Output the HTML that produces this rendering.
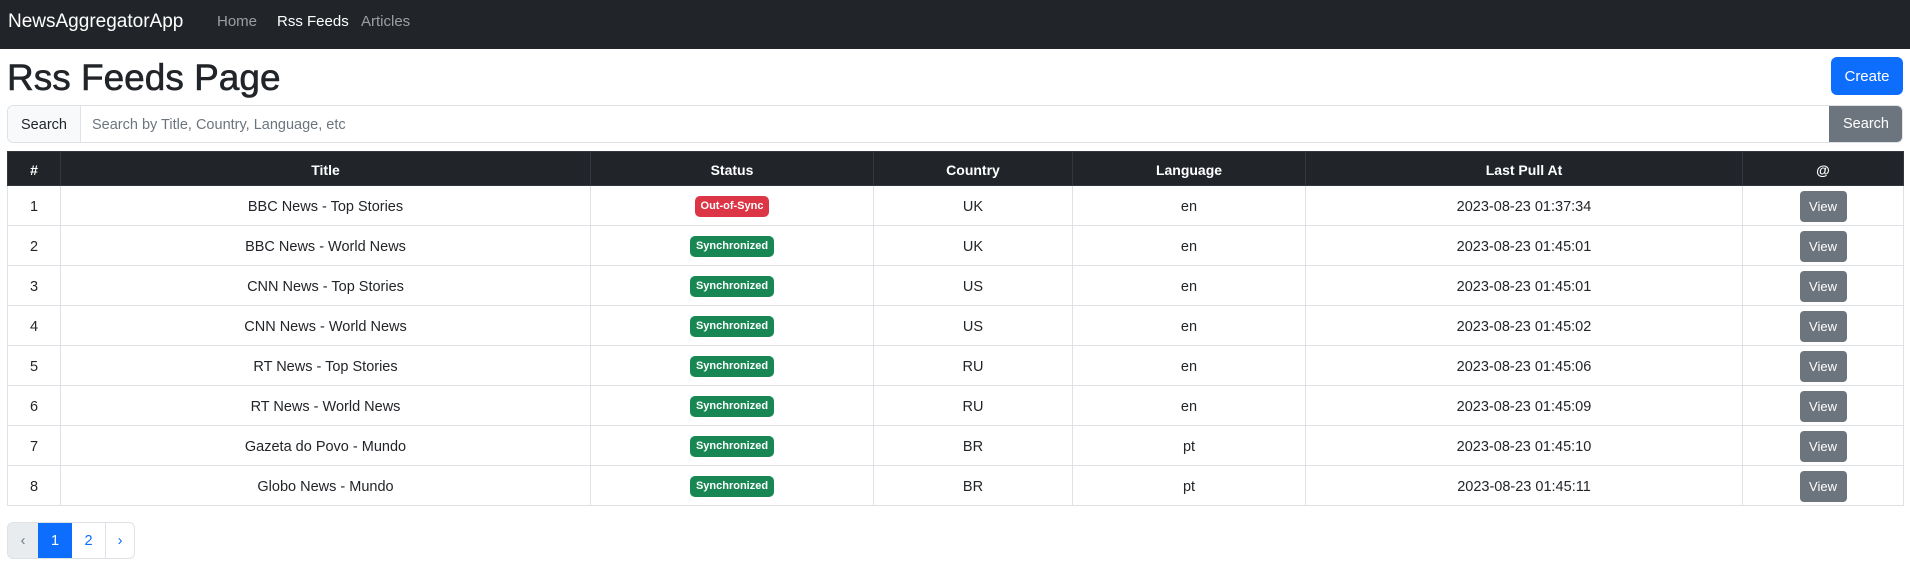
<!DOCTYPE html>
<html><head><meta charset="utf-8"><style>
*{box-sizing:border-box;margin:0;padding:0}
body{width:1910px;height:564px;overflow:hidden;background:#fff;font-family:"Liberation Sans",sans-serif;color:#212529;font-size:14.5px}
.nav{height:49px;background:#212529;position:relative}
.nav span{position:absolute;top:13px;font-size:15px;color:rgba(255,255,255,.55)}
.nav .brand{left:8px;top:11px;font-size:19px;color:#fff}
h1{position:absolute;left:7px;top:54px;font-size:37px;font-weight:normal;line-height:48px;-webkit-text-stroke:0.6px #212529}
.create{position:absolute;left:1831px;top:57px;width:72px;height:38px;background:#0d6efd;color:#fff;border-radius:6px;text-align:center;line-height:40px;font-size:15px}
.ig{position:absolute;left:7px;top:105px;width:1896px;height:38px;border:1px solid #dee2e6;border-radius:6px;display:flex;overflow:hidden}
.ig .l{width:73px;background:#f8f9fa;border-right:1px solid #dee2e6;text-align:center;line-height:38px}
.ig .i{flex:1;line-height:38px;padding-left:11px;color:#6c757d}
.ig .b{width:74px;background:#6c757d;color:#fff;text-align:center;line-height:38px;margin:-1px -1px -1px 0}
table{position:absolute;left:7px;top:151px;width:1896px;border-collapse:collapse;table-layout:fixed}
th{background:#212529;color:#fff;height:34px;font-size:14px;font-weight:700;border:1px solid #32383e;text-align:center;padding-top:2px}
td{height:40px;border:1px solid #dee2e6;text-align:center;padding-top:2px}
.bd{display:inline-block;vertical-align:middle;color:#fff;font-size:11px;font-weight:700;border-radius:5px;padding:0 6px;line-height:21px;height:21px}
.r{background:#dc3545}.g{background:#198754}
.v{display:inline-block;vertical-align:middle;background:#6c757d;color:#fff;font-size:13px;width:47px;height:31px;line-height:32px;border-radius:4px}
.pg{position:absolute;left:7px;top:522px;height:37px;display:flex;border:1px solid #dee2e6;border-radius:6px;overflow:hidden}
.pg div{line-height:36px;text-align:center;color:#0d6efd;border-left:1px solid #dee2e6}
</style></head><body>
<div class="nav"><span class="brand">NewsAggregatorApp</span><span style="left:217px">Home</span><span style="left:277px;color:#fff">Rss Feeds</span><span style="left:361px">Articles</span></div>
<h1>Rss Feeds Page</h1>
<div class="create">Create</div>
<div class="ig"><div class="l">Search</div><div class="i">Search by Title, Country, Language, etc</div><div class="b">Search</div></div>
<table>
<colgroup><col style="width:53px"><col style="width:530px"><col style="width:283px"><col style="width:199px"><col style="width:233px"><col style="width:437px"><col style="width:161px"></colgroup>
<tr><th>#</th><th>Title</th><th>Status</th><th>Country</th><th>Language</th><th>Last Pull At</th><th>@</th></tr>
<tr><td>1</td><td>BBC News - Top Stories</td><td><span class="bd r">Out-of-Sync</span></td><td>UK</td><td>en</td><td>2023-08-23 01:37:34</td><td><span class="v">View</span></td></tr>
<tr><td>2</td><td>BBC News - World News</td><td><span class="bd g">Synchronized</span></td><td>UK</td><td>en</td><td>2023-08-23 01:45:01</td><td><span class="v">View</span></td></tr>
<tr><td>3</td><td>CNN News - Top Stories</td><td><span class="bd g">Synchronized</span></td><td>US</td><td>en</td><td>2023-08-23 01:45:01</td><td><span class="v">View</span></td></tr>
<tr><td>4</td><td>CNN News - World News</td><td><span class="bd g">Synchronized</span></td><td>US</td><td>en</td><td>2023-08-23 01:45:02</td><td><span class="v">View</span></td></tr>
<tr><td>5</td><td>RT News - Top Stories</td><td><span class="bd g">Synchronized</span></td><td>RU</td><td>en</td><td>2023-08-23 01:45:06</td><td><span class="v">View</span></td></tr>
<tr><td>6</td><td>RT News - World News</td><td><span class="bd g">Synchronized</span></td><td>RU</td><td>en</td><td>2023-08-23 01:45:09</td><td><span class="v">View</span></td></tr>
<tr><td>7</td><td>Gazeta do Povo - Mundo</td><td><span class="bd g">Synchronized</span></td><td>BR</td><td>pt</td><td>2023-08-23 01:45:10</td><td><span class="v">View</span></td></tr>
<tr><td>8</td><td>Globo News - Mundo</td><td><span class="bd g">Synchronized</span></td><td>BR</td><td>pt</td><td>2023-08-23 01:45:11</td><td><span class="v">View</span></td></tr>
</table>
<div class="pg"><div style="width:30px;background:#e9ecef;color:#6c757d;border:0">‹</div><div style="width:34px;background:#0d6efd;color:#fff;border:0">1</div><div style="width:33px;border:0">2</div><div style="width:29px">›</div></div>
</body></html>
